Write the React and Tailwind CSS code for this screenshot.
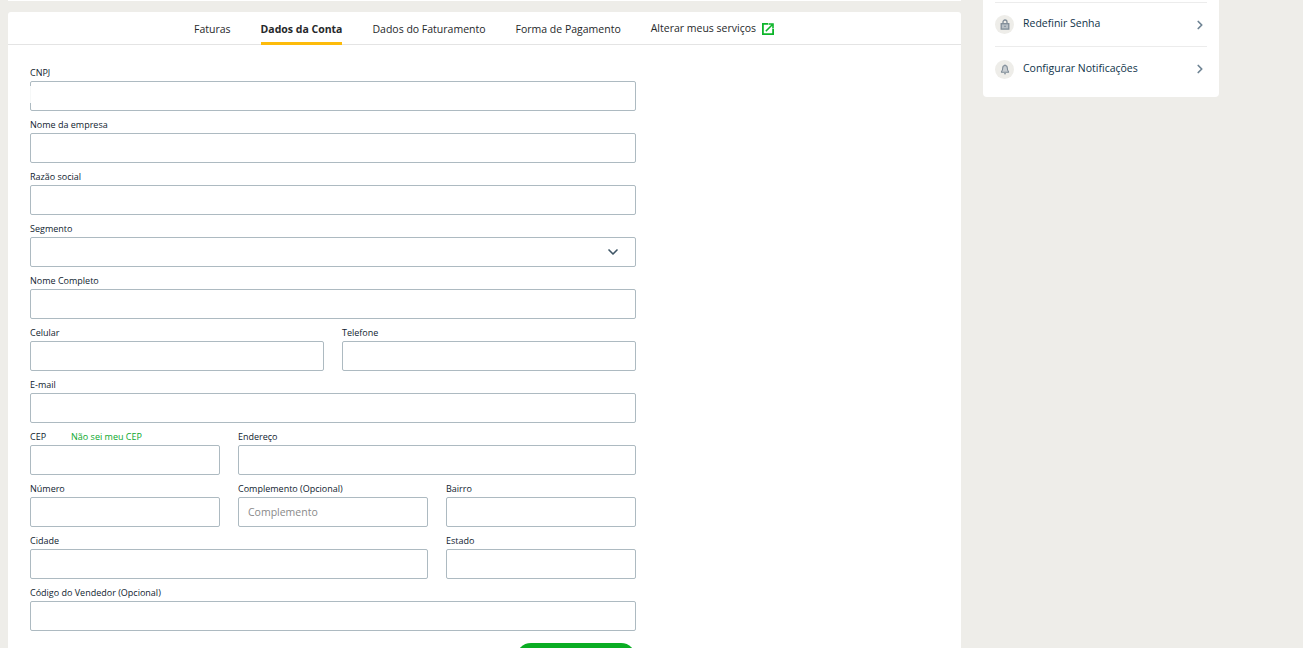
import React from "react";
import { ChevronDown, ChevronRight } from "lucide-react";

const tabs = ["Faturas", "Dados da Conta", "Dados do Faturamento", "Forma de Pagamento"];

// each row adds up to 6 grid columns
const rows = [
  [{ label: "CNPJ", span: "col-span-6", cut: true }],
  [{ label: "Nome da empresa", span: "col-span-6" }],
  [{ label: "Razão social", span: "col-span-6" }],
  [{ label: "Segmento", span: "col-span-6", select: true }],
  [{ label: "Nome Completo", span: "col-span-6" }],
  [
    { label: "Celular", span: "col-span-3" },
    { label: "Telefone", span: "col-span-3" },
  ],
  [{ label: "E-mail", span: "col-span-6" }],
  [
    { label: "CEP", span: "col-span-2", link: "Não sei meu CEP" },
    { label: "Endereço", span: "col-span-4" },
  ],
  [
    { label: "Número", span: "col-span-2" },
    { label: "Complemento (Opcional)", span: "col-span-2", placeholder: "Complemento" },
    { label: "Bairro", span: "col-span-2" },
  ],
  [
    { label: "Cidade", span: "col-span-4" },
    { label: "Estado", span: "col-span-2" },
  ],
  [{ label: "Código do Vendedor (Opcional)", span: "col-span-6" }],
];

const LockIcon = () => (
  <svg width="10" height="11" viewBox="0 0 10 11" fill="none" stroke="#7f8c98" strokeWidth="1.300">
    <path d="M3 4.500V3a2 2 0 0 1 4 0v1.500" />
    <rect x="1.200" y="4.700" width="7.600" height="5.400" fill="#b9c0c6" />
    <path d="M5 6.700v1.400" strokeWidth="1.500" />
  </svg>
);

const BellIcon = () => (
  <svg width="10" height="11" viewBox="0 0 10 11" fill="#c9ced2" stroke="#7f8c98" strokeWidth="1.100">
    <path d="M5 1.500c1.500 0 2.300 1 2.300 2.600 0 1.800.4 2.800 1.200 3.600v.5h-7v-.5c.8-.8 1.200-1.800 1.200-3.600C2.700 2.500 3.500 1.500 5 1.500z" />
    <path d="M5 .5v1M4 9.800h2" fill="none" />
  </svg>
);

const ExternalIcon = () => (
  <svg width="12" height="12" viewBox="0 0 12 12" fill="none" stroke="#0db52a" strokeWidth="1.800" className="-mr-px">
    <path d="M6 .9H.9v10.200h10.200V6" />
    <path d="M3.800 8.200 10 2M6.500 1h4.500v4.500" strokeWidth="1.600" />
  </svg>
);

const Field = ({ field }) => (
  <div className={field.span}>
    <div className="flex h-[22px] pt-[7px] text-[9px] leading-[14px] text-[#10232f]">
      <label>{field.label}</label>
      {field.link && <a className="ml-[25px] text-[#0aa82c]">{field.link}</a>}
    </div>
    <div className="relative">
      {field.select ? (
        <select className="block h-[30px] w-full appearance-none rounded-[2px] border border-[#adbac1] bg-white" />
      ) : (
        <input
          type="text"
          placeholder={field.placeholder}
          className="block h-[30px] w-full rounded-[2px] border border-[#adbac1] bg-white px-[9px] text-[10.500px] outline-none placeholder:text-[#8a8a8a]"
        />
      )}
      {field.select && <ChevronDown className="absolute right-[15px] top-[7px] text-[#3f5666]" size={16} strokeWidth={2.500} />}
      {field.cut && <div className="absolute left-0 top-[5px] h-[17px] w-px bg-[#f6f8f8]" />}
    </div>
  </div>
);

const SideRow = ({ icon, label }) => (
  <div className="group flex h-[44px] items-center border-t border-[#ececec] last:h-[45px]">
    <span className="flex h-[19px] w-[19px] items-center justify-center rounded-full bg-[#eeede9]">{icon}</span>
    <span className="mb-[2px] ml-[9px] flex-1 text-[10.500px] text-[#10344a] group-last:mb-0">{label}</span>
    <ChevronRight className="text-[#6f8494]" size={14} strokeWidth={3} />
  </div>
);

export default function App() {
  return (
    <div className="flex h-[648px] gap-[22px] overflow-hidden bg-[#eeede9] pl-2 font-['Open_Sans',sans-serif]">
      <div className="w-[953px]">
        <div className="mb-[11px] h-px bg-white" />
        <div className="rounded-t-[3px] bg-white pb-8">
          <div className="flex h-[33px] justify-center gap-[30px] border-b border-[#e4e4e4] pr-[2px] text-[10.500px] text-[#26282a]">
            {tabs.map((tab) => (
              <a
                key={tab}
                className={
                  tab === "Dados da Conta"
                    ? "h-[33px] border-b-[3px] border-[#fdbb0b] pt-[9px] font-bold leading-[16px]"
                    : "pt-[9px] leading-[16px]"
                }
              >
                {tab}
              </a>
            ))}
            <a className="mt-[9px] flex h-[16px] items-center gap-[6px]">
              Alterar meus serviços
              <ExternalIcon />
            </a>
          </div>
          <form className="w-[628px] pl-[22px] pt-[14px]">
            {rows.map((row) => (
              <div key={row[0].label} className="grid grid-cols-6 gap-x-[18px]">
                {row.map((field) => (
                  <Field key={field.label} field={field} />
                ))}
              </div>
            ))}
            <div className="mt-3 flex justify-end">
              <button type="button" aria-label="Salvar" className="h-10 w-[120px] rounded-[15px] bg-[#0aad23]" />
            </div>
          </form>
        </div>
      </div>
      <aside className="h-[97px] w-[236px] rounded-b-[4px] bg-white px-3 pt-[2px]">
        <SideRow icon={<LockIcon />} label="Redefinir Senha" />
        <SideRow icon={<BellIcon />} label="Configurar Notificações" />
      </aside>
    </div>
  );
}
